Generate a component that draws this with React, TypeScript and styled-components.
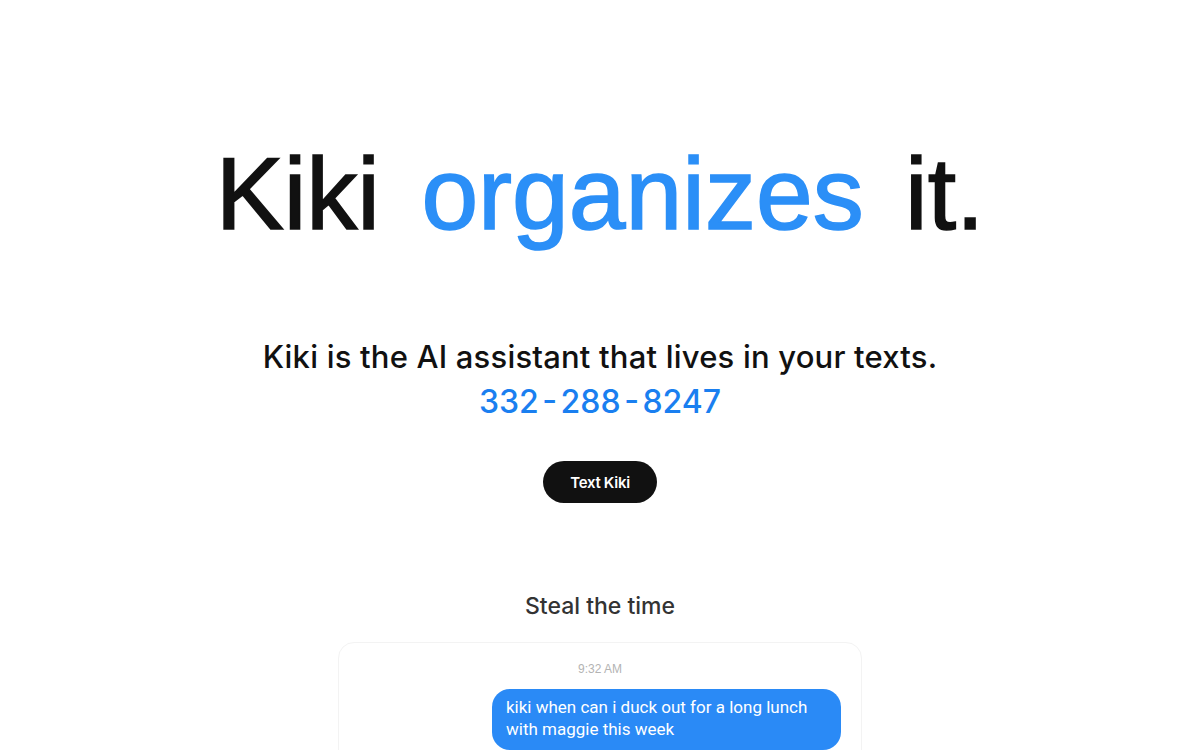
import React from 'react';
import styled, { createGlobalStyle } from 'styled-components';

const GlobalStyle = createGlobalStyle`
  html, body {
    margin: 0;
    padding: 0;
    background: #ffffff;
  }
  body {
    font-family: Inter, "Noto Sans", sans-serif;
    overflow: hidden;
  }
`;

export default function App() {
  return (
    <>
      <GlobalStyle />
      <StyledPage>
        <StyledHero>
          <StyledTitle>
            Kiki <StyledAccent>organizes</StyledAccent> it.
          </StyledTitle>
          <StyledTagline>Kiki is the AI assistant that lives in your texts.</StyledTagline>
          <StyledPhone>332 - 288 - 8247</StyledPhone>
          <StyledButton>Text Kiki</StyledButton>
        </StyledHero>

        <StyledDemo>
          <StyledDemoTitle>Steal the time</StyledDemoTitle>
          <StyledChat>
            <StyledTime>9:32 AM</StyledTime>
            <StyledBubble>kiki when can i duck out for a long lunch with maggie this week</StyledBubble>
          </StyledChat>
        </StyledDemo>
      </StyledPage>
    </>
  );
}

const StyledPage = styled.main`
  display: flex;
  flex-direction: column;
  align-items: center;
  min-height: 750px;
  padding-top: 133px;
  box-sizing: border-box;
`;

const StyledHero = styled.section`
  display: flex;
  flex-direction: column;
  align-items: center;
`;

const StyledTitle = styled.h1`
  margin: 0;
  font-family: "Liberation Sans", Arial, sans-serif;
  font-weight: 400;
  font-size: 102px;
  line-height: 122px;
  word-spacing: 13px;
  -webkit-text-stroke: 1.6px currentColor;
  color: #111111;
`;

const StyledAccent = styled.span`
  color: #2b8ff7;
`;

const StyledTagline = styled.p`
  margin: 79px 0 0;
  font-size: 31px;
  line-height: 45px;
  font-weight: 500;
  letter-spacing: 0.2px;
  color: #111111;
`;

const StyledPhone = styled.a`
  font-size: 32px;
  line-height: 45px;
  font-weight: 500;
  letter-spacing: 0;
  word-spacing: -5px;
  color: #1a7ff0;
  text-decoration: none;
`;

const StyledButton = styled.button`
  margin-top: 37px;
  height: 42px;
  width: 114px;
  border: none;
  border-radius: 21px;
  background: #111111;
  color: #ffffff;
  font-family: Inter, sans-serif;
  font-size: 15px;
  font-weight: 600;
  letter-spacing: -0.3px;
  cursor: pointer;
`;

const StyledDemo = styled.section`
  margin-top: 88px;
  display: flex;
  flex-direction: column;
  align-items: center;
`;

const StyledDemoTitle = styled.h2`
  margin: 0;
  font-size: 23px;
  line-height: 30px;
  font-weight: 500;
  letter-spacing: 0;
  color: #333333;
`;

const StyledChat = styled.div`
  margin-top: 21px;
  width: 524px;
  box-sizing: border-box;
  border: 1px solid #f3f3f3;
  border-radius: 16px;
  padding: 19px 20px 20px;
  display: flex;
  flex-direction: column;
  align-items: flex-end;
`;

const StyledTime = styled.div`
  align-self: center;
  font-family: "Liberation Sans", Arial, sans-serif;
  font-size: 12px;
  line-height: 14px;
  color: #b3b3b3;
`;

const StyledBubble = styled.div`
  margin-top: 13px;
  width: 349px;
  box-sizing: border-box;
  padding: 7px 14px 10px;
  border-radius: 18px;
  background: #2a8af6;
  color: #ffffff;
  font-family: Roboto, sans-serif;
  font-size: 17px;
  line-height: 22px;
`;
